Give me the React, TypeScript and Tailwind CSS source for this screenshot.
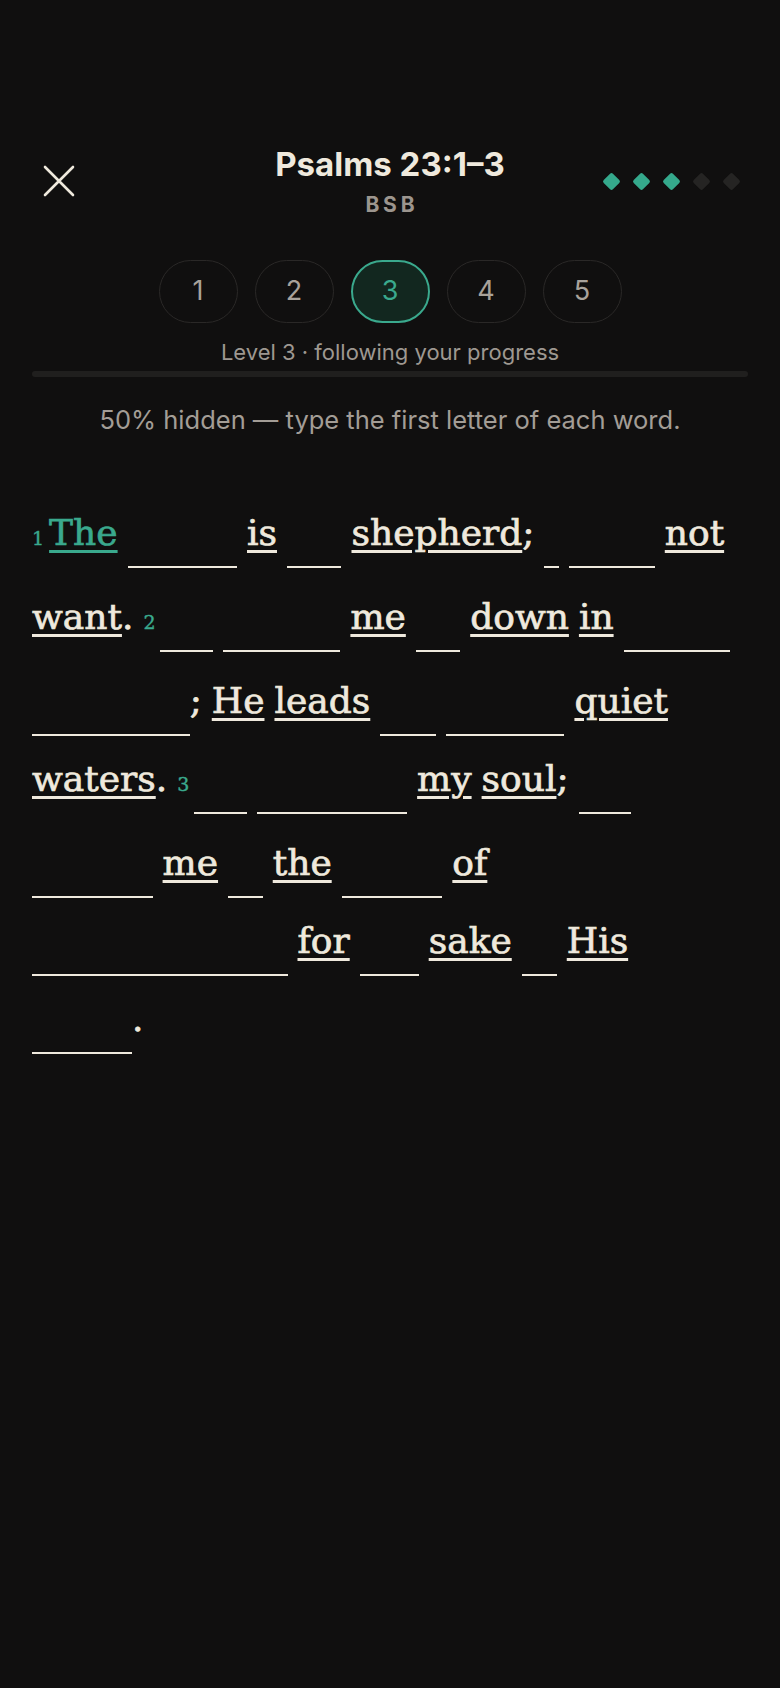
import { useState } from 'react';

interface Token {
  w: string;
  hidden?: boolean;
  punct?: string;
  verse?: number;
}

const tokens: Token[] = [
  { w: 'The', verse: 1 },
  { w: 'LORD', hidden: true },
  { w: 'is' },
  { w: 'my', hidden: true },
  { w: 'shepherd', punct: ';' },
  { w: 'I', hidden: true },
  { w: 'shall', hidden: true },
  { w: 'not' },
  { w: 'want', punct: '.' },
  { w: 'He', hidden: true, verse: 2 },
  { w: 'makes', hidden: true },
  { w: 'me' },
  { w: 'lie', hidden: true },
  { w: 'down' },
  { w: 'in' },
  { w: 'green', hidden: true },
  { w: 'pastures', hidden: true, punct: ';' },
  { w: 'He' },
  { w: 'leads' },
  { w: 'me', hidden: true },
  { w: 'beside', hidden: true },
  { w: 'quiet' },
  { w: 'waters', punct: '.' },
  { w: 'He', hidden: true, verse: 3 },
  { w: 'restores', hidden: true },
  { w: 'my' },
  { w: 'soul', punct: ';' },
  { w: 'He', hidden: true },
  { w: 'guides', hidden: true },
  { w: 'me' },
  { w: 'in', hidden: true },
  { w: 'the' },
  { w: 'paths', hidden: true },
  { w: 'of' },
  { w: 'righteousness', hidden: true },
  { w: 'for' },
  { w: 'the', hidden: true },
  { w: 'sake' },
  { w: 'of', hidden: true },
  { w: 'His' },
  { w: 'name', hidden: true, punct: '.' },
];

const sans = "font-['Inter','Liberation_Sans',sans-serif]";

function CloseIcon() {
  return (
    <svg width="34" height="34" viewBox="0 0 34 34" fill="none">
      <path d="M3 3L31 31M31 3L3 31" stroke="#efe9dd" strokeWidth="2.6" strokeLinecap="round" />
    </svg>
  );
}

function Word({ tok, active }: { tok: Token; active: boolean }) {
  return (
    <span className="inline-flex items-baseline">
      {tok.verse && (
        <span className="mr-[5px] inline-block pb-[26px] text-[19px] leading-none text-[#3aa98d] [-webkit-text-stroke:0.4px_currentColor]">
          {tok.verse}
        </span>
      )}
      {tok.hidden ? (
        <span className="inline-block border-b-2 border-[#efe9dd] pb-[13px] text-transparent">{tok.w}</span>
      ) : (
        <span
          className={
            'underline decoration-[3px] underline-offset-[5px] [-webkit-text-stroke:0.7px_currentColor] ' +
            (active ? 'text-[#3aa98d] decoration-[#3aa98d]' : 'text-[#efe9dd] decoration-[#efe9dd]')
          }
        >
          {tok.w}
        </span>
      )}
      {tok.punct && <span className="text-[#efe9dd] [-webkit-text-stroke:0.7px_currentColor]">{tok.punct}</span>}
    </span>
  );
}

export default function App() {
  const [level, setLevel] = useState(3);
  const filled = 3;

  return (
    <div className="min-h-screen bg-[#100f0f] px-8 pt-[145px] pb-20">
      <div className="grid grid-cols-[1fr_auto_1fr] items-center">
        <div className="flex">
          <button className="ml-[2px] flex h-[50px] w-[50px] items-center justify-center">
            <CloseIcon />
          </button>
        </div>
        <div className={`flex flex-col items-center gap-[10px] ${sans}`}>
          <h1 className="text-[33px] font-bold leading-[38px] text-[#efe9dd]">Psalms 23:1–3</h1>
          <div className="pl-[0.18em] text-[21px] font-bold leading-[24px] tracking-[0.18em] text-[#9c958e]">BSB</div>
        </div>
        <div className="flex items-center justify-end gap-[17px] pr-[10px]">
          {[0, 1, 2, 3, 4].map((i) => (
            <span
              key={i}
              className={
                'block h-[13px] w-[13px] rotate-45 rounded-[2px] ' + (i < filled ? 'bg-[#35a98c]' : 'bg-[#252423]')
              }
            />
          ))}
        </div>
      </div>

      <div className={`mt-[43px] flex justify-center gap-[17px] ${sans}`}>
        {[1, 2, 3, 4, 5].map((n) => (
          <button
            key={n}
            onClick={() => setLevel(n)}
            className={
              'flex h-[63px] w-[79px] items-center justify-center rounded-full text-[27px] font-normal ' +
              (n === level
                ? 'border-2 border-[#3aa98d] bg-[#12271f] text-[#3aa98d]'
                : 'border-[1.5px] border-[#2a2827] text-[#a8a29b]')
            }
          >
            {n}
          </button>
        ))}
      </div>

      <p className={`mt-[15px] text-center text-[22px] leading-[29px] text-[#9e9891] ${sans}`}>
        Level {level} · following your progress
      </p>
      <div className="mt-[4px] h-[6px] rounded-full bg-[#201f1e]" />

      <p className={`mt-[26px] text-center text-[25.5px] leading-[34px] text-[#a39d96] ${sans}`}>
        50% hidden — type the first letter of each word.
      </p>

      <div className="mt-[76px] flex flex-wrap items-baseline gap-x-[10px] gap-y-[23px] font-['DejaVu_Serif',serif] text-[36px] leading-[40px]">
        {tokens.map((t, i) => (
          <Word key={i} tok={t} active={i === 0} />
        ))}
      </div>
    </div>
  );
}
